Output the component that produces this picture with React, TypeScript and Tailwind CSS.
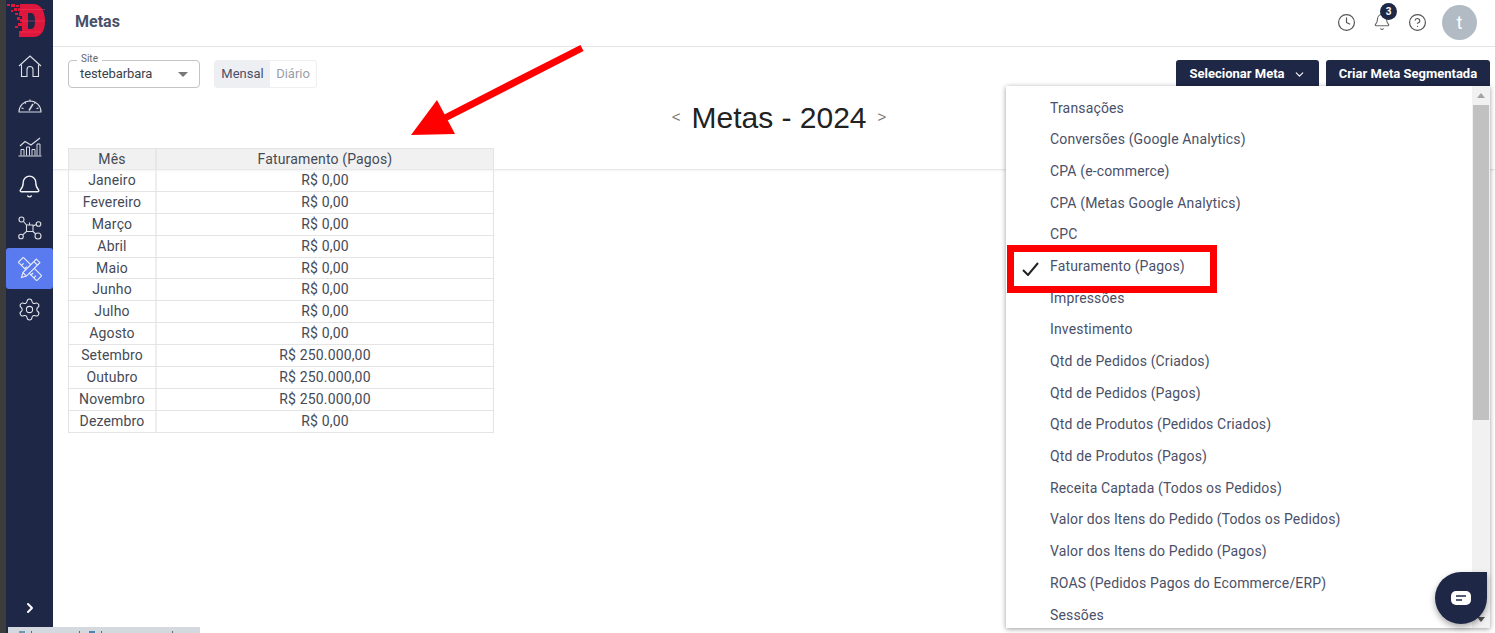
import { Bell, ChevronDown, ChevronRight, CircleHelp, Clock, Settings } from "lucide-react";

const months = [
  ["Janeiro", "R$ 0,00"],
  ["Fevereiro", "R$ 0,00"],
  ["Março", "R$ 0,00"],
  ["Abril", "R$ 0,00"],
  ["Maio", "R$ 0,00"],
  ["Junho", "R$ 0,00"],
  ["Julho", "R$ 0,00"],
  ["Agosto", "R$ 0,00"],
  ["Setembro", "R$ 250.000,00"],
  ["Outubro", "R$ 250.000,00"],
  ["Novembro", "R$ 250.000,00"],
  ["Dezembro", "R$ 0,00"],
];

const metas = [
  "Transações",
  "Conversões (Google Analytics)",
  "CPA (e-commerce)",
  "CPA (Metas Google Analytics)",
  "CPC",
  "Faturamento (Pagos)",
  "Impressões",
  "Investimento",
  "Qtd de Pedidos (Criados)",
  "Qtd de Pedidos (Pagos)",
  "Qtd de Produtos (Pedidos Criados)",
  "Qtd de Produtos (Pagos)",
  "Receita Captada (Todos os Pedidos)",
  "Valor dos Itens do Pedido (Todos os Pedidos)",
  "Valor dos Itens do Pedido (Pagos)",
  "ROAS (Pedidos Pagos do Ecommerce/ERP)",
  "Sessões",
];

function Logo() {
  return (
    <svg width="47" height="41" viewBox="0 0 47 41">
      <path
        fillRule="evenodd"
        d="M14 4H27C35 4 39 11 39 21C39 31 35 37 27 37H13V31H16V12H14zM22 13V29H25C28 29 29 26 29 21C29 16 28 13 25 13z"
        fill="#e0173d"
      />
      <path d="M14 9.500h25M14 21h25M14 32h20" stroke="#f0405f" strokeWidth="1" opacity="0.5" />
      <path
        d="M1 4h3v2H1zM5 4h4v3H5zM10 5h3v2h-3zM8 8h3v3H8zM12 8h3v3h-3zM5 10h2v2H5zM9 13h3v2H9zM13 12h3v4h-3zM11 17h3v3h-3zM14 19h2v3h-2zM12 23h4v3h-4zM9 26h3v2H9z"
        fill="#e0173d"
      />
    </svg>
  );
}

function HomeIcon() {
  return (
    <svg width="24" height="23" viewBox="0 0 24 23" fill="none" stroke="#dfe2e8" strokeWidth="1.100">
      <path d="M1 11 12 1l11 10" />
      <path d="M3.500 9.500V21.500h5.500v-7a3 3 0 0 1 6 0v7h5.500V9.500" />
    </svg>
  );
}

function GaugeIcon() {
  return (
    <svg width="24" height="17" viewBox="0 0 24 17" fill="none" stroke="#d8dbe2" strokeWidth="1.100">
      <path d="M1 16a11 11 0 0 1 22 0z" />
      <path d="M3.500 12l2 .6M6.500 6l1.400 1.500M12 3.500v2M17.500 6l-1.400 1.500M20.500 12l-2 .6" />
      <path d="M11 14.500 15 8" strokeWidth="1.500" />
    </svg>
  );
}

function ChartIcon() {
  return (
    <svg width="24" height="21" viewBox="0 0 24 21" fill="none" stroke="#d8dbe2" strokeWidth="1">
      <path d="M0.500 20h23M3 19.500v-6h3v6M8.500 19.500V11h3v8.500M14 19.500v-6h3v6M19 19.500V8h3v11.500" />
      <path d="M2 10l5-4.500 6 3.500 9-7" strokeWidth="1.200" />
    </svg>
  );
}

function NetworkIcon() {
  return (
    <svg width="24" height="24" viewBox="0 0 24 24" fill="none" stroke="#d8dbe2" strokeWidth="1.100">
      <path d="M8.500 9h6.500v6.500H8.500z" />
      <circle cx="3.500" cy="3.500" r="2.500" />
      <circle cx="20.500" cy="8" r="2.300" />
      <circle cx="3" cy="20.500" r="2.300" />
      <circle cx="20" cy="20" r="3" />
      <path d="M5.500 5.500 8.500 9M18.300 8.600 15 10M4.700 18.800 8.500 15.500M17.800 18l-2.800-2.500M11.500 9V6.500" />
    </svg>
  );
}

function ToolsIcon() {
  return (
    <svg width="26" height="26" viewBox="0 0 26 26" fill="none" stroke="#eef1f8" strokeWidth="1.100">
      <g transform="rotate(-45 13 13)">
        <rect x="9.500" y="0" width="7" height="26" rx="0.500" />
        <path d="M9.500 4.500h3M9.500 9h3M9.500 18h3M9.500 22h3" />
      </g>
      <g transform="rotate(45 13 13)">
        <path
          d="M10.500 1.500h5v19L13 25l-2.500-4.500zM10.500 5h5M10.500 20.500h5"
          fill="#5a7bef"
        />
      </g>
    </svg>
  );
}

function Sidebar() {
  return (
    <aside className="w-[47px] shrink-0 bg-[#1e2746] flex flex-col items-center">
      <div className="h-[41px] w-full"><Logo /></div>
      <div className="h-[41px] mt-[2px] pt-[5px] w-full flex items-center justify-center"><HomeIcon /></div>
      <div className="h-[41px] w-full flex items-center justify-center"><GaugeIcon /></div>
      <div className="h-[41px] pt-[2px] w-full flex items-center justify-center"><ChartIcon /></div>
      <div className="h-[41px] w-full flex items-center justify-center"><Bell size={25} strokeWidth={1.3} color="#f3f4f6" /></div>
      <div className="h-[41px] w-full flex items-center justify-center"><NetworkIcon /></div>
      <div className="h-[41px] w-full flex items-center justify-center bg-[#5a7bef] rounded-[3px]"><ToolsIcon /></div>
      <div className="h-[41px] w-full flex items-center justify-center"><Settings size={25} strokeWidth={1} color="#e5e7eb" /></div>
      <ChevronRight size={16} strokeWidth={3} color="#ffffff" className="mt-auto mb-[17px]" />
    </aside>
  );
}

function Header() {
  return (
    <header className="h-[47px] shrink-0 border-b border-[#e5e5e5] flex items-center pl-[22px] pr-[18px] pb-[2px]">
      <h1 className="text-[16px] font-bold text-[#4a5068]">Metas</h1>
      <div className="ml-auto flex items-center">
        <Clock size={19} strokeWidth={1.5} color="#555" />
        <div className="relative ml-[17px]">
          <Bell size={18} strokeWidth={1.5} color="#666" />
          <span className="absolute -top-[10px] left-[7px] w-[17px] h-[17px] rounded-full bg-[#1e2746] text-white text-[10px] font-bold flex items-center justify-center">3</span>
        </div>
        <CircleHelp size={19} strokeWidth={1.5} color="#555" className="ml-[17px]" />
        <div className="ml-[15px] w-[35px] h-[35px] rounded-full bg-[#b2bbc4] text-white text-[18px] flex items-center justify-center">t</div>
      </div>
    </header>
  );
}

function Toolbar() {
  return (
    <div className="flex items-start pl-[15px] pr-[5px] pt-[13px]">
      <div className="relative w-[132px] h-[28px] border border-[#c4c4c4] rounded-[4px] flex items-center pl-[11px] text-[13px] tracking-[-0.1px] text-[#3a3f4b]">
        <span className="absolute -top-[8px] left-[8px] px-[4px] bg-white text-[10px] tracking-normal leading-[12px] text-[#666]">Site</span>
        testebarbara
        <span className="absolute right-[11px] top-[11px] w-0 h-0 border-x-[5px] border-x-transparent border-t-[5px] border-t-[#777]" />
      </div>
      <div className="ml-[14px] h-[28px] flex text-[13px] rounded-[3px] border border-[#eeeeee] overflow-hidden">
        <span className="w-[55px] bg-[#eeeff2] text-[#4a5068] flex items-center justify-center">Mensal</span>
        <span className="w-[46px] text-[#9a9ea8] flex items-center justify-center">Diário</span>
      </div>
      <div className="ml-auto flex gap-[7px]">
        <button className="w-[143px] h-[26px] pt-[2px] bg-[#1e2746] text-white text-[13px] font-bold rounded-t-[3px] flex items-center justify-center gap-[8px]">
          Selecionar Meta <ChevronDown size={13} strokeWidth={2} />
        </button>
        <button className="w-[164px] h-[26px] pt-[2px] bg-[#1e2746] text-white text-[13px] font-bold rounded-t-[3px]">Criar Meta Segmentada</button>
      </div>
    </div>
  );
}

function MetasTable() {
  return (
    <section className="text-[14px] tracking-[0.15px] text-[#454a55]">
      <div className="border-b border-[#e8e8e8] pl-[15px] shadow-[0_1px_2px_rgba(0,0,0,0.05)]">
        <div className="w-[426px] h-[21px] flex bg-[#f1f1f1] border-x border-t border-[#e4e4e4] leading-[20px] text-center">
          <div className="w-[88px] border-r-2 border-[#e6e6e6]">Mês</div>
          <div className="flex-1">Faturamento (Pagos)</div>
        </div>
      </div>
      <div className="ml-[15px] w-[426px] border-x border-[#e4e4e4] text-center">
        {months.map(([month, value]) => (
          <div key={month} className="h-[21.9px] flex border-b border-[#e4e4e4] leading-[20px]">
            <div className="w-[88px] border-r-2 border-[#eeeeee]">{month}</div>
            <div className="flex-1">{value}</div>
          </div>
        ))}
      </div>
    </section>
  );
}

function MetaDropdown() {
  return (
    <div className="absolute left-[1006px] top-[86px] w-[484px] h-[542px] bg-white shadow-[0_1px_5px_rgba(0,0,0,0.4)] flex overflow-hidden">
      <ul className="flex-1 pt-[6.5px] text-[14px] tracking-[0.15px] text-[#4a5068]">
        {metas.map((meta) => (
          <li key={meta} className="relative h-[31.7px] pl-[44px] leading-[31px]">
            {meta === "Faturamento (Pagos)" && (
              <svg width="17" height="14" viewBox="0 0 17 14" className="absolute left-[16px] top-[11px]" fill="none" stroke="#222" strokeWidth="2">
                <path d="M1 8l5 5L16 1" />
              </svg>
            )}
            {meta}
          </li>
        ))}
      </ul>
      <div className="w-[18px] bg-[#f1f1f1] flex flex-col items-center">
        <span className="mt-[7px] w-0 h-0 border-x-[4px] border-x-transparent border-b-[5px] border-b-[#a3a3a3]" />
        <div className="mt-[7px] w-[16px] h-[315px] bg-[#c1c1c1]" />
        <span className="mt-auto mb-[6px] w-0 h-0 border-x-[4px] border-x-transparent border-t-[5px] border-t-[#505050]" />
      </div>
    </div>
  );
}

export default function App() {
  return (
    <div className="relative h-[633px] w-[1495px] overflow-hidden bg-white flex font-['Roboto',sans-serif]">
      <div className="w-[6px] shrink-0 bg-[#3c3c3c]" />
      <Sidebar />
      <main className="flex-1 flex flex-col">
        <Header />
        <Toolbar />
        <div className="h-[60px] pb-[2px] flex items-center justify-center gap-[11px] text-[#777] font-['Liberation_Sans',sans-serif] pl-[10px]">
          <span className="text-[15px]">&lt;</span>
          <span className="text-[30px] text-[#222]">Metas - 2024</span>
          <span className="text-[15px]">&gt;</span>
        </div>
        <MetasTable />
      </main>

      <MetaDropdown />

      {/* marcacoes vermelhas por cima do print */}
      <div className="absolute left-[1007px] top-[245px] w-[210px] h-[48px] border-[7px] border-[#ff0000]" />
      <svg className="absolute left-[405px] top-[40px]" width="185" height="100" viewBox="0 0 185 100">
        <path d="M177 8 38 79" stroke="#ff0000" strokeWidth="7" />
        <path d="M6 95 32 60 50 94z" fill="#ff0000" />
      </svg>

      <div className="absolute left-[1435px] top-[572px] w-[52px] h-[52px] bg-[#1e2746] rounded-full rounded-tr-[6px] shadow-[0_3px_6px_rgba(0,0,0,0.35)] flex items-center justify-center">
        <svg width="22" height="16" viewBox="0 0 22 16">
          <rect x="1" y="1" width="20" height="14" rx="5" fill="#fff" />
          <path d="M6 6h10M6 10h6" stroke="#1e2746" strokeWidth="1.500" />
        </svg>
      </div>

      <div className="absolute left-[8px] top-[627px] w-[192px] h-[6px] bg-[#d4d9df] overflow-hidden">
        <div className="flex items-end h-full">
          <span className="ml-[11px] w-[6px] h-[2px] bg-[#6f9bb8]" />
          <span className="ml-[6px] w-[1px] h-[2px] bg-[#666]" />
          <span className="ml-[47px] w-[1px] h-[2px] bg-[#666]" />
          <span className="ml-[9px] w-[6px] h-[2px] bg-[#4f86b0]" />
          <span className="ml-[6px] w-[1px] h-[2px] bg-[#666]" />
          <span className="ml-[70px] w-[1px] h-[2px] bg-[#666]" />
        </div>
      </div>
    </div>
  );
}
